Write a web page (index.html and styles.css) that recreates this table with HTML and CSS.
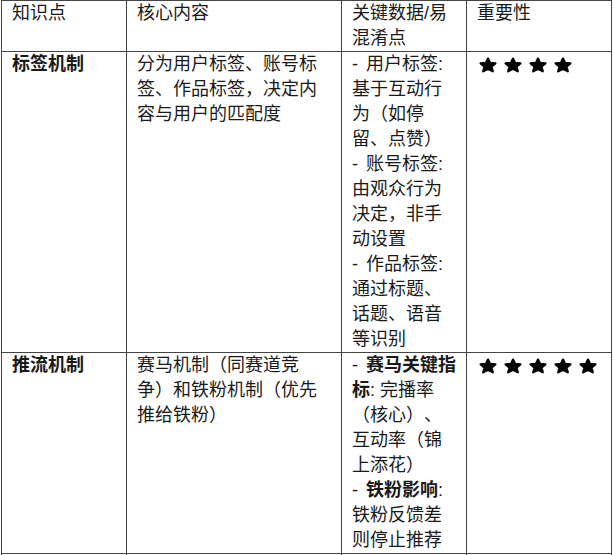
FILE: index.html
```html
<!DOCTYPE html>
<html lang="zh">
<head>
<meta charset="utf-8">
<link rel="stylesheet" href="styles.css">
</head>
<body>
<table class="kt">
  <colgroup>
    <col class="c1"><col class="c2"><col class="c3"><col class="c4">
  </colgroup>
  <thead>
    <tr>
      <th>知识点</th>
      <th>核心内容</th>
      <th>关键数据/易混淆点</th>
      <th>重要性</th>
    </tr>
  </thead>
  <tbody>
    <tr>
      <td class="name">标签机制</td>
      <td>分为用户标签、账号标签、作品标签，决定内容与用户的匹配度</td>
      <td><span class="dash">-</span> 用户标签: 基于互动行为（如停留、点赞）<br><span class="dash">-</span> 账号标签: 由观众行为决定，非手动设置<br><span class="dash">-</span> 作品标签: 通过标题、话题、语音等识别</td>
      <td><span class="stars" aria-label="4 stars">
        <svg class="star" viewBox="0 0 20 16"><use href="#st"/></svg>
        <svg class="star" viewBox="0 0 20 16"><use href="#st"/></svg>
        <svg class="star" viewBox="0 0 20 16"><use href="#st"/></svg>
        <svg class="star" viewBox="0 0 20 16"><use href="#st"/></svg>
      </span></td>
    </tr>
    <tr>
      <td class="name">推流机制</td>
      <td>赛马机制（同赛道竞争）和铁粉机制（优先推给铁粉）</td>
      <td><span class="dash">-</span> <b>赛马关键指标</b>: 完播率（核心）、互动率（锦上添花）<br><span class="dash">-</span> <b>铁粉影响</b>: 铁粉反馈差则停止推荐</td>
      <td><span class="stars" aria-label="5 stars">
        <svg class="star" viewBox="0 0 20 16"><use href="#st"/></svg>
        <svg class="star" viewBox="0 0 20 16"><use href="#st"/></svg>
        <svg class="star" viewBox="0 0 20 16"><use href="#st"/></svg>
        <svg class="star" viewBox="0 0 20 16"><use href="#st"/></svg>
        <svg class="star" viewBox="0 0 20 16"><use href="#st"/></svg>
      </span></td>
    </tr>
    <tr class="more">
      <td></td><td></td><td></td><td></td>
    </tr>
  </tbody>
</table>
<svg class="defs" width="0" height="0">
  <defs>
    <path id="st" d="M10 1.6 L12.2 5.9 L17.4 6.3 L13.5 9.6 L14.8 14.4 L10 11.8 L5.2 14.4 L6.5 9.6 L2.6 6.3 L7.8 5.9 Z" fill="#000" stroke="#000" stroke-width="2.2" stroke-linejoin="round"/>
  </defs>
</svg>
</body>
</html>
```

FILE: styles.css
```css
html, body {
  margin: 0;
  padding: 0;
  background: #fff;
}
body {
  padding-left: 1px;
  font-family: "Liberation Sans", "Noto Sans CJK SC", sans-serif;
  font-size: 18px;
  line-height: 25px;
  color: #1a1a1a;
  text-spacing-trim: space-all;
}
.kt {
  border-collapse: collapse;
  table-layout: fixed;
  width: 610px;
}
.c1 { width: 125px; }
.c2 { width: 215px; }
.c3 { width: 125px; }
.c4 { width: 145px; }
.kt th, .kt td {
  border: 1px solid #444;
  padding: 0 10px;
  vertical-align: top;
  text-align: left;
  font-weight: normal;
  word-break: break-all;
}
.kt td.name {
  font-weight: bold;
}
.kt b {
  font-weight: bold;
}
.dash {
  margin-right: 3px;
}
.stars {
  display: flex;
  gap: 5px;
  padding-top: 5px;
  padding-left: 1px;
}
.star {
  width: 20px;
  height: 16px;
  display: block;
}
.more td {
  height: 40px;
}
.defs {
  position: absolute;
}
```
